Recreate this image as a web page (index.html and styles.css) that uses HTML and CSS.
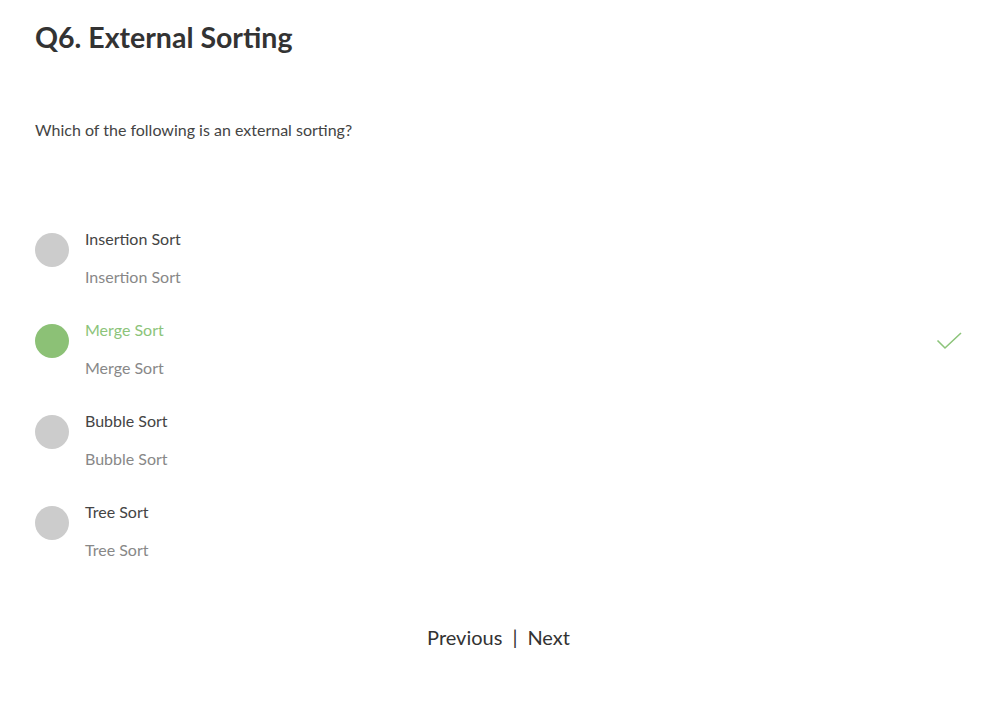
FILE: index.html
```html
<!DOCTYPE html>
<html>
<head>
<meta charset="utf-8">
<link rel="stylesheet" href="styles.css">
</head>
<body>
<div class="page">
  <h1 class="title">Q6. External Sorting</h1>
  <p class="question">Which of the following is an external sorting?</p>
  <ul class="options">
    <li class="option">
      <span class="dot"></span>
      <div class="texts">
        <div class="label">Insertion Sort</div>
        <div class="sub">Insertion Sort</div>
      </div>
    </li>
    <li class="option correct">
      <span class="dot"></span>
      <div class="texts">
        <div class="label">Merge Sort</div>
        <div class="sub">Merge Sort</div>
      </div>
      <svg class="check" width="26" height="18" viewBox="0 0 26 18"><path d="M1.5 8.5 L9 16 L25 1" fill="none" stroke="#8cc47a" stroke-width="1.6"/></svg>
    </li>
    <li class="option">
      <span class="dot"></span>
      <div class="texts">
        <div class="label">Bubble Sort</div>
        <div class="sub">Bubble Sort</div>
      </div>
    </li>
    <li class="option">
      <span class="dot"></span>
      <div class="texts">
        <div class="label">Tree Sort</div>
        <div class="sub">Tree Sort</div>
      </div>
    </li>
  </ul>
  <nav class="pager">
    <a class="pager-link">Previous</a>
    <span class="sep">|</span>
    <a class="pager-link">Next</a>
  </nav>
</div>
</body>
</html>
```
FILE: styles.css
```css
html, body {
  margin: 0;
  padding: 0;
  background: #fff;
}
body {
  font-family: "Lato", "Open Sans", sans-serif;
  color: #444;
}
.page {
  padding: 17px 35px 0 35px;
}
.title {
  margin: 0;
  font-size: 28.5px;
  font-weight: 700;
  color: #333;
  line-height: 40px;
}
.question {
  margin: 62px 0 0 0;
  font-size: 16px;
  line-height: 22px;
  color: #444;
}
.options {
  list-style: none;
  margin: 87px 0 0 0;
  padding: 0;
  display: flex;
  flex-direction: column;
  gap: 22px;
}
.option {
  display: flex;
  align-items: flex-start;
  height: 69px;
}
.dot {
  width: 34px;
  height: 34px;
  border-radius: 50%;
  background: #cccccc;
  flex: none;
  margin-top: 5px;
  margin-right: 16px;
}
.texts {
  display: flex;
  flex-direction: column;
  gap: 16px;
  flex: 1;
}
.label {
  font-size: 16px;
  line-height: 22px;
  color: #444;
}
.sub {
  font-size: 16px;
  line-height: 22px;
  color: #888;
}
.correct .dot {
  background: #8cc176;
}
.correct .label {
  color: #8cc47a;
}
.check {
  flex: none;
  margin-top: 13px;
}
.pager {
  display: flex;
  justify-content: center;
  align-items: center;
  gap: 10px;
  margin-top: 55px;
  font-size: 20px;
  color: #333;
}
.pager-link {
  color: #333;
}
.sep {
  color: #333;
}
```
